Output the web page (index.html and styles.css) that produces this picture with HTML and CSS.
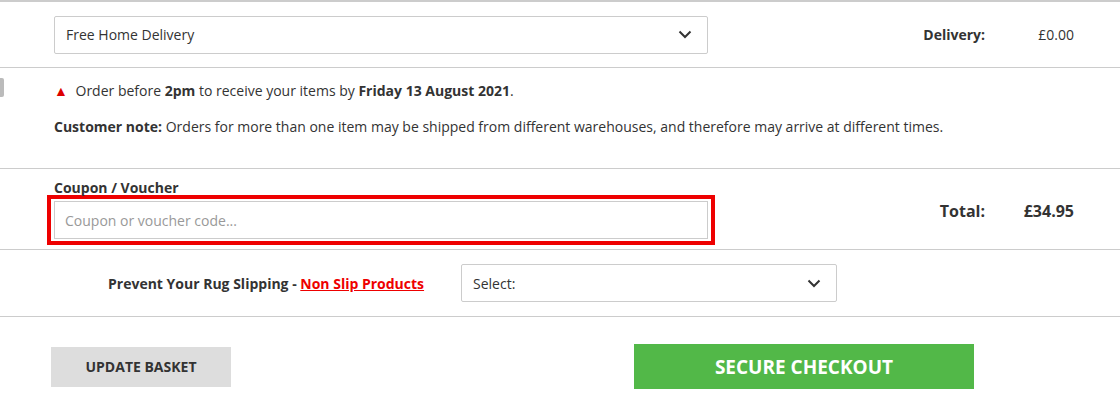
FILE: index.html
```html
<!DOCTYPE html>
<html lang="en">
<head>
    <meta charset="UTF-8">
    <title>Basket</title>
    <link rel="stylesheet" href="styles.css">
</head>
<body>
    <div class="basket">
        <div class="row delivery-row">
            <div class="select-box wide">
                <span>Free Home Delivery</span>
                <svg class="chev" width="14" height="9" viewBox="0 0 14 9"><path d="M1.5 1.5 L7 7 L12.5 1.5" fill="none" stroke="#333" stroke-width="2"/></svg>
            </div>
            <div class="sum">
                <span class="sum-label">Delivery:</span>
                <span class="sum-value">£0.00</span>
            </div>
        </div>

        <div class="row notes-row">
            <span class="scroll-tab"></span>
            <p class="warn"><span class="tri">&#9650;</span> Order before <b>2pm</b> to receive your items by <b>Friday 13 August 2021</b>.</p>
            <p><b>Customer note:</b> Orders for more than one item may be shipped from different warehouses, and therefore may arrive at different times.</p>
        </div>

        <div class="row coupon-row">
            <div class="coupon">
                <label class="coupon-label">Coupon / Voucher</label>
                <div class="highlight">
                    <input type="text" placeholder="Coupon or voucher code...">
                </div>
            </div>
            <div class="sum total">
                <span class="sum-label">Total:</span>
                <span class="sum-value">£34.95</span>
            </div>
        </div>

        <div class="row slip-row">
            <span class="slip-text">Prevent Your Rug Slipping - <a href="#">Non Slip Products</a></span>
            <div class="select-box narrow">
                <span>Select:</span>
                <svg class="chev" width="14" height="9" viewBox="0 0 14 9"><path d="M1.5 1.5 L7 7 L12.5 1.5" fill="none" stroke="#333" stroke-width="2"/></svg>
            </div>
        </div>

        <div class="actions">
            <button class="update">UPDATE BASKET</button>
            <button class="checkout">SECURE CHECKOUT</button>
        </div>
    </div>
</body>
</html>
```

FILE: styles.css
```css
body {
    margin: 0;
    font-family: 'Open Sans', sans-serif;
    font-size: 14px;
    color: #333;
    background: #fff;
}

.basket {
    width: 1120px;
    border-top: 2px solid #ccc;
}

.row {
    border-bottom: 1px solid #ccc;
}

.select-box {
    display: flex;
    align-items: center;
    justify-content: space-between;
    box-sizing: border-box;
    height: 38px;
    border: 1px solid #ccc;
    border-radius: 2px;
    padding: 0 15px 0 11px;
}

.select-box.wide { width: 654px; }
.select-box.narrow { width: 376px; padding-left: 11px; }

.delivery-row {
    display: flex;
    align-items: center;
    height: 65px;
    padding-left: 54px;
}

.sum {
    display: flex;
    margin-left: auto;
    margin-right: 46px;
    font-size: 14px;
}

.sum-label {
    font-weight: bold;
    width: 150px;
    text-align: right;
}

.sum-value {
    width: 89px;
    text-align: right;
}

.notes-row {
    position: relative;
    height: 101px;
    padding-left: 54px;
    padding-top: 13px;
    box-sizing: border-box;
}

.notes-row p {
    margin: 0 0 16px;
    line-height: 20px;
}

.scroll-tab {
    position: absolute;
    left: 0;
    top: 10px;
    width: 4px;
    height: 19px;
    background: #bbb;
    border-radius: 0 2px 2px 0;
}

.tri {
    color: #d00;
    font-size: 14px;
    margin-right: 4px;
}

.coupon-row {
    display: flex;
    align-items: center;
    height: 80px;
}

.coupon {
    padding-left: 47px;
    padding-top: 5px;
}

.coupon-label {
    display: block;
    font-weight: bold;
    padding-left: 7px;
    line-height: 19px;
    margin-bottom: -2px;
}

.highlight {
    border: 4px solid #e00;
    padding: 2px 3px;
    width: 668px;
    box-sizing: border-box;
}

.highlight input {
    display: block;
    box-sizing: border-box;
    width: 100%;
    height: 38px;
    border: 1px solid #ccc;
    padding: 0 10px;
    font-family: 'Open Sans', sans-serif;
    font-size: 14px;
}

.highlight input::placeholder {
    color: #999;
}

.total {
    font-size: 16px;
    margin-top: 4px;
}

.total .sum-value {
    font-weight: bold;
}

.slip-row {
    display: flex;
    align-items: center;
    height: 66px;
    padding-left: 108px;
}

.slip-text {
    font-weight: bold;
    width: 353px;
}

.slip-text a {
    color: #e00;
    text-decoration: underline;
}

.actions {
    display: flex;
    align-items: center;
    padding: 27px 0 0 51px;
}

button {
    border: none;
    font-family: 'Open Sans', sans-serif;
    font-weight: bold;
    cursor: pointer;
}

.update {
    width: 180px;
    height: 40px;
    background: #ddd;
    color: #333;
    font-size: 14px;
}

.checkout {
    width: 340px;
    height: 45px;
    margin-left: 403px;
    background: #52b848;
    color: #fff;
    font-size: 19px;
}
```
